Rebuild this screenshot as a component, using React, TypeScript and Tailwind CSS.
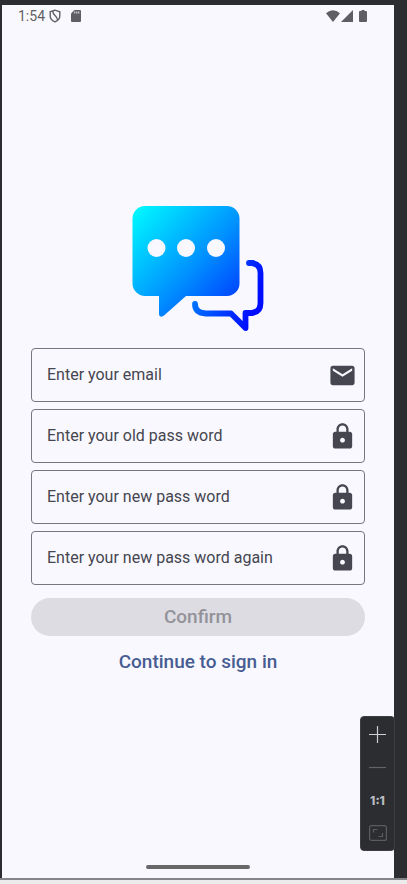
import React, { useState } from "react";

type FieldProps = {
  id: string;
  label: string;
  type: "email" | "password";
  icon: React.ReactNode;
};

function MailIcon() {
  return (
    <svg viewBox="0 0 24 24" className="size-[29px]" fill="currentColor" aria-hidden="true">
      <path d="M20 4H4c-1.100 0-1.990.9-1.990 2L2 18c0 1.100.9 2 2 2h16c1.100 0 2-.9 2-2V6c0-1.100-.9-2-2-2zm0 4-8 5-8-5V6l8 5 8-5v2z" />
    </svg>
  );
}

function LockIcon() {
  return (
    <svg viewBox="0 0 24 24" className="size-[29px]" fill="currentColor" aria-hidden="true">
      <path d="M18 8h-1V6c0-2.760-2.240-5-5-5S7 3.240 7 6v2H6c-1.100 0-2 .9-2 2v10c0 1.100.9 2 2 2h12c1.100 0 2-.9 2-2V10c0-1.100-.9-2-2-2zm-6 9c-1.100 0-2-.9-2-2s.9-2 2-2 2 .9 2 2-.9 2-2 2zm3.100-9H8.900V6c0-1.710 1.390-3.100 3.100-3.100s3.100 1.390 3.100 3.100v2z" />
    </svg>
  );
}

function Logo() {
  return (
    <svg viewBox="0 0 132 126" className="h-[126px] w-[132px]" role="img" aria-label="Chat">
      <defs>
        <linearGradient id="bubble" gradientUnits="userSpaceOnUse" x1="4" y1="4" x2="122" y2="116">
          <stop offset="0" stopColor="#00f6ff" />
          <stop offset="0.5" stopColor="#0090ff" />
          <stop offset="0.82" stopColor="#0044ff" />
          <stop offset="1" stopColor="#0010ff" />
        </linearGradient>
        <linearGradient id="outline" gradientUnits="userSpaceOnUse" x1="60" y1="90" x2="120" y2="110">
          <stop offset="0" stopColor="#0078ff" />
          <stop offset="1" stopColor="#000cff" />
        </linearGradient>
      </defs>
      <path
        fill="url(#bubble)"
        d="M13 0h82a12.500 12.500 0 0 1 12.500 12.500v65a12.500 12.500 0 0 1-12.500 12.500H54L32 109.500Q30 111 28.500 110.500Q27 110 27 108V90H13A12.500 12.500 0 0 1 .5 77.500v-65A12.500 12.500 0 0 1 13 0Z"
      />
      <circle cx="24.500" cy="42" r="9" fill="#f9f8ff" />
      <circle cx="54" cy="42" r="9" fill="#f9f8ff" />
      <circle cx="84" cy="42" r="9" fill="#f9f8ff" />
      <path
        fill="none"
        stroke="url(#outline)"
        strokeWidth="5.800"
        strokeLinecap="round"
        strokeLinejoin="round"
        d="M117 57h3q8.500 1 8.500 10v30q0 9-8.500 10h-6.500v15L99 107.500H74q-11-.5-11-9.500"
      />
    </svg>
  );
}

function Field({ id, label, type, icon }: FieldProps) {
  return (
    <div className="flex h-[54px] items-center rounded border border-[#767680] pr-[7px] pl-[15px] text-[#45464f]">
      <div className="grid min-w-0 flex-1 items-center">
        <input
          id={id}
          type={type}
          placeholder=" "
          className="peer col-start-1 row-start-1 w-full bg-transparent text-base outline-none"
        />
        <label
          htmlFor={id}
          className="invisible col-start-1 row-start-1 cursor-text text-base peer-placeholder-shown:visible"
        >
          {label}
        </label>
      </div>
      {icon}
    </div>
  );
}

function StatusBar() {
  return (
    <header className="flex h-[22px] items-center justify-between pr-[27px] pl-4 text-[#5f5f63]">
      <div className="flex items-center">
        <span className="text-sm leading-5">1:54</span>
        <svg viewBox="0 0 12 14" className="ml-1 h-[14px] w-3" fill="none" stroke="currentColor" strokeWidth="1.400" aria-hidden="true">
          <path d="M6 1.200 1.200 2.800v4.200c0 2.600 2 4.700 4.800 5.800 2.800-1.100 4.800-3.200 4.800-5.800V2.800ZM4 2.500c-.5 4 4.500 4 4.500 8.500" />
        </svg>
        <svg viewBox="0 0 10 12" className="ml-[10px] h-3 w-[10px]" aria-hidden="true">
          <path fill="currentColor" d="M3.500 0H9q1 0 1 1v10q0 1-1 1H1q-1 0-1-1V3.500Z" />
          <path stroke="#f9f8ff" strokeWidth="0.900" d="M3.800 1.500v2M5.800 1.500v2M7.800 1.500v2" />
        </svg>
      </div>
      <div className="flex items-center" aria-hidden="true">
        <svg viewBox="0 0 14 12" className="h-3 w-[14px]" fill="currentColor">
          <path d="M7 12 0 3.200Q7-2.800 14 3.200Z" />
        </svg>
        <svg viewBox="0 0 12 12" className="ml-px h-3 w-3" fill="currentColor">
          <path d="M12 0v12H0Z" />
        </svg>
        <svg viewBox="0 0 8 12" className="ml-[6px] h-3 w-2" fill="currentColor">
          <path d="M2.500 0h3v1H7q1 0 1 1v9q0 1-1 1H1q-1 0-1-1V2q0-1 1-1h1.500Z" />
        </svg>
      </div>
    </header>
  );
}

function ZoomPanel() {
  return (
    <div className="absolute right-3 bottom-[33px] flex w-[35px] flex-col items-center rounded border border-[#3c3e41] bg-[#2b2d30] py-px">
      <button type="button" aria-label="Zoom in" className="grid h-[33px] w-full place-items-center text-[#ced0d6]">
        <svg viewBox="0 0 17 17" className="size-[17px]" stroke="currentColor" strokeWidth="1.200">
          <path d="M8.500 0v17M0 8.500h17" />
        </svg>
      </button>
      <button type="button" aria-label="Zoom out" className="grid h-[33px] w-full place-items-center text-[#626468]">
        <svg viewBox="0 0 17 17" className="size-[17px]" stroke="currentColor" strokeWidth="1.200">
          <path d="M0 8.500h17" />
        </svg>
      </button>
      <button type="button" className="h-[33px] w-full font-[Inter,sans-serif] text-xs font-extrabold text-[#b9bbc0]">
        1:1
      </button>
      <button type="button" aria-label="Zoom to fit" className="grid h-[32px] w-full place-items-center text-[#5a5c60]">
        <svg viewBox="0 0 18 16" className="h-4 w-[18px]" fill="none" stroke="currentColor" strokeWidth="1.200">
          <rect x="0.600" y="0.600" width="16.800" height="14.800" rx="2" />
          <path d="M4.500 7.500V4.500H8.500M13.500 8v3.500H9.500" />
        </svg>
      </button>
    </div>
  );
}

export default function App() {
  const [canConfirm] = useState(false);

  return (
    <div className="relative flex min-h-screen flex-col bg-[#2b2d30] pt-[5px] font-[Roboto,sans-serif]">
      <div className="mr-[13px] ml-[2px] flex flex-1 flex-col bg-[#f9f8ff]">
        <StatusBar />
        <main className="flex flex-1 flex-col items-center justify-center px-[29px] pb-[10px]">
          <Logo />
          <form className="mt-4 flex w-full flex-col gap-[7px]">
            <Field id="email" label="Enter your email" type="email" icon={<MailIcon />} />
            <Field id="old" label="Enter your old pass word" type="password" icon={<LockIcon />} />
            <Field id="new" label="Enter your new pass word" type="password" icon={<LockIcon />} />
            <Field id="again" label="Enter your new pass word again" type="password" icon={<LockIcon />} />
            <button
              type="submit"
              disabled={!canConfirm}
              className="mt-[6px] h-[38px] rounded-full bg-[#dddce3] text-[19px] font-medium text-[#939299]"
            >
              Confirm
            </button>
          </form>
          <a href="#sign-in" className="mt-3 text-[19px] leading-7 font-medium text-[#475d92]">
            Continue to sign in
          </a>
        </main>
        <footer className="flex justify-center pb-[9px]">
          <div className="h-1 w-[104px] rounded-full bg-[#68686b]" />
        </footer>
      </div>
      <div className="h-[6px] border-t-2 border-[#858489] bg-[#ececec]" />
      <ZoomPanel />
    </div>
  );
}
